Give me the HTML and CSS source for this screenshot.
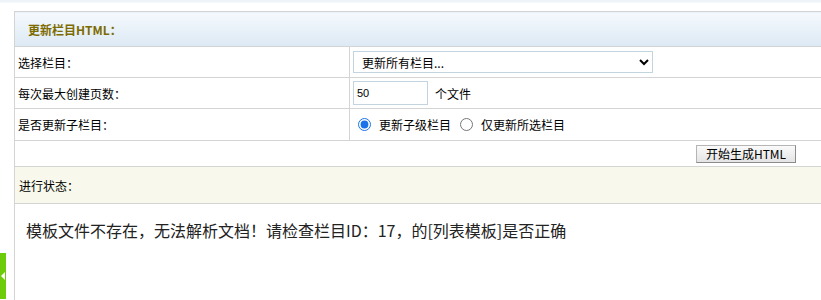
FILE: index.html
```html
<!DOCTYPE html>
<html>
<head>
<meta charset="utf-8">
<link rel="stylesheet" href="styles.css">
</head>
<body>
<div class="topstrip"></div>
<div class="wrap">
<table class="form">
  <tr class="head"><td colspan="2"><span class="title">更新栏目HTML：</span></td></tr>
  <tr class="row"><td class="lbl">选择栏目：</td><td class="val"><select class="sel"><option>更新所有栏目...</option></select></td></tr>
  <tr class="row"><td class="lbl">每次最大创建页数：</td><td class="val"><input class="num" type="text" value="50"><span class="unit">个文件</span></td></tr>
  <tr class="row row3"><td class="lbl">是否更新子栏目：</td><td class="val"><label class="opt"><input type="radio" name="s" checked> 更新子级栏目</label><label class="opt"><input type="radio" name="s"> 仅更新所选栏目</label></td></tr>
  <tr class="btnrow"><td colspan="2"><div class="btnwrap"><button class="go">开始生成HTML</button></div></td></tr>
  <tr class="status"><td colspan="2">进行状态：</td></tr>
  <tr class="msg"><td colspan="2">模板文件不存在，无法解析文档！请检查栏目ID：17，的[列表模板]是否正确</td></tr>
</table>
</div>
<div class="sidetab"><span class="arrow"></span></div>
</body>
</html>
```
FILE: styles.css
```css
html, body { margin: 0; padding: 0; background: #fff; overflow: hidden; height: 300px; }
body { font-family: "SimSun", "Noto Sans CJK SC", sans-serif; font-size: 12px; color: #000; position: relative; }
.topstrip { height: 3px; background: linear-gradient(#eaf1f7, #f6f9fc); }
.wrap { padding: 8px 0 0 14px; }
.form { border-collapse: collapse; width: 840px; border-left: 1px solid #d4d4d4; border-top: 1px solid #d4d4d4; }
.form td { border-bottom: 1px solid #d4d4d4; padding: 0; }
.head td { height: 34px; background: linear-gradient(#f5f9fd, #dce9f4); padding-left: 13px; }
.title { color: #7d6b00; font-weight: bold; font-size: 12px; font-family: "Noto Sans CJK SC", sans-serif; }
.row td { height: 30px; }
.row3 td { height: 31px; }
.lbl { width: 331px; padding-left: 3px !important; border-right: 1px solid #d4d4d4; }
.val { padding-left: 3px !important; }
.sel { width: 300px; height: 22px; border: 1px solid #c3d4e1; border-radius: 0; background: #fff; font-family: "Noto Sans CJK SC", sans-serif; font-size: 12px; padding: 0 4px; }
.num { width: 67px; height: 20px; border: 1px solid #c3d4e1; padding: 1px 3px; font-family: "Liberation Sans", sans-serif; font-size: 11px; vertical-align: middle; box-sizing: content-box; }
.unit { margin-left: 7px; vertical-align: middle; }
.opt { display: inline-flex; align-items: center; margin-left: 5px; margin-right: 4px; }
.opt input { margin: 0 8px 0 0; width: 13px; height: 13px; accent-color: #1a73e8; }
.btnrow td { height: 25px; }
.btnwrap { display: flex; justify-content: flex-end; padding-right: 58px; }
.go { width: 100px; height: 18px; padding: 0; border: 1px solid #b5b5b5; border-right-color: #8c8c8c; border-bottom-color: #8c8c8c; background: linear-gradient(#fafafa, #e4e4e4); font-family: "Noto Sans CJK SC", sans-serif; font-size: 12px; line-height: 16px; color: #000; }
.status td { height: 36px; background: #f8f9ec; padding-left: 4px; }
.msg td { height: 96px; vertical-align: top; padding: 14px 0 0 11px; font-family: "Noto Sans CJK SC", sans-serif; font-size: 16px; color: #222; border-bottom: none; }
.sidetab { position: absolute; left: 0; top: 253px; width: 6px; height: 46px; background: #6ccc0a; }
.arrow { position: absolute; left: 1px; top: 19px; width: 0; height: 0; border-top: 4px solid transparent; border-bottom: 4px solid transparent; border-right: 4px solid #fff; }
```
